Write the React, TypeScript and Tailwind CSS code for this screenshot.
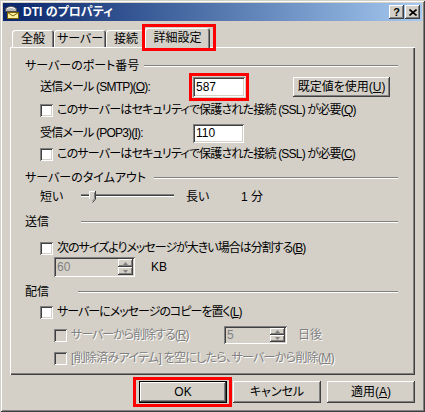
import React from 'react';

const raised =
  'shadow-[inset_-1px_-1px_#404040,inset_1px_1px_#ffffff,inset_-2px_-2px_#808080,inset_2px_2px_#d4d0c8]';
const sunken =
  'shadow-[inset_1px_1px_#808080,inset_-1px_-1px_#ffffff,inset_2px_2px_#404040,inset_-2px_-2px_#d4d0c8]';
const dim = 'text-[#808080] [text-shadow:1px_1px_0_#ffffff]';

const Check: React.FC<{ disabled?: boolean }> = ({ disabled }) => (
  <span className={`block w-[13px] h-[13px] shrink-0 ${disabled ? 'bg-[#d4d0c8]' : 'bg-white'} ${sunken}`} />
);

const GroupHead: React.FC<{ label: string; textW: string; className?: string }> = ({ label, textW, className }) => (
  <div className={`flex items-center h-4 pl-[15px] pr-[17px] ${className ?? ''}`}>
    <span className={`${textW} shrink-0 whitespace-nowrap`}>{label}</span>
    <div className="flex-1 h-[2px] border-t border-t-[#808080] border-b border-b-white" />
  </div>
);

const Arrow: React.FC<{ up?: boolean }> = ({ up }) => (
  <svg width="5" height="3" viewBox="0 0 5 3">
    <polygon points={up ? '2.5,0 5,3 0,3' : '0,0 5,0 2.5,3'} fill="#808080" />
  </svg>
);

const Spin: React.FC<{ value: string; className: string }> = ({ value, className }) => (
  <div className={`flex p-[2px] bg-[#d4d0c8] ${sunken} ${className}`}>
    <span className="flex-1 flex items-center pl-[1px] text-[#808080]">{value}</span>
    <div className="flex flex-col w-[15px]">
      <span className={`flex-1 flex items-center justify-center bg-[#d4d0c8] ${raised}`}>
        <Arrow up />
      </span>
      <span className={`flex-1 flex items-center justify-center bg-[#d4d0c8] ${raised}`}>
        <Arrow />
      </span>
    </div>
  </div>
);

const Tab: React.FC<{ label: string; w: string }> = ({ label, w }) => (
  <div
    className={`${w} h-[17px] flex items-center justify-center rounded-t-[3px] shadow-[inset_1px_1px_#ffffff,inset_-1px_0_#404040,inset_-2px_0_#808080]`}
  >
    {label}
  </div>
);

const Button: React.FC<{ children: React.ReactNode; className?: string }> = ({ children, className }) => (
  <div className={`flex items-center justify-center bg-[#d4d0c8] whitespace-nowrap ${raised} ${className ?? ''}`}>
    {children}
  </div>
);

const TitleIcon = () => (
  <svg width="16" height="16" viewBox="0 0 16 16">
    <path d="M1.5 7.5 V4.5 Q7 0.5 12.5 4.5 V7.5 Z" fill="#b8b8b8" stroke="#505050" />
    <path d="M3 4.5 Q7 2 11 4.5" fill="none" stroke="#ffffff" />
    <rect x="3.5" y="8.5" width="11" height="6" fill="#fff3a0" stroke="#7a6000" />
    <polyline points="3.5,8.5 9,12 14.5,8.5" fill="none" stroke="#7a6000" />
  </svg>
);

export default function App() {
  return (
    <div
      className={`w-[425px] h-[412px] p-[3px] flex flex-col bg-[#d4d0c8] text-black text-[12px] leading-none font-['Liberation_Sans','Noto_Sans_CJK_JP',sans-serif] [font-feature-settings:'palt'] shadow-[inset_1px_1px_#d4d0c8,inset_-1px_-1px_#404040,inset_2px_2px_#ffffff,inset_-2px_-2px_#808080]`}
    >
      {/* Title bar */}
      <div className="h-[18px] flex items-center bg-linear-to-r from-[#0a246a] to-[#a6caf0] pl-[1px] pr-[2px]">
        <TitleIcon />
        <span className="ml-[3px] text-white font-bold whitespace-nowrap">DTI のプロパティ</span>
        <div className="flex-1" />
        <Button className="w-[15px] h-[14px] font-bold text-[11px]">?</Button>
        <Button className="w-[15px] h-[14px] ml-[1px]">
          <svg width="8" height="7" viewBox="0 0 8 7">
            <path d="M0.5 0.5 L7.5 6.5 M7.5 0.5 L0.5 6.5" stroke="#000" strokeWidth="1.6" />
          </svg>
        </Button>
      </div>

      <div className="flex flex-col px-[7px]">
        {/* Tabs */}
        <div className="flex items-end h-[19px] mt-[7px] pl-[2px]">
          <Tab label="全般" w="w-[42px]" />
          <Tab label="サーバー" w="w-[52px]" />
          <Tab label="接続" w="w-[40px]" />
          <div className="relative z-10 -ml-[1px] -mb-[2px] w-[65px] h-[21px] pb-[2px] flex items-center justify-center rounded-t-[3px] bg-[#d4d0c8] shadow-[inset_1px_1px_#ffffff,inset_-1px_0_#404040,inset_-2px_0_#808080]">
            詳細設定
            <span className="absolute -left-[3px] -right-[6px] -top-[4px] -bottom-[2px] border-3 border-[#ff0000] pointer-events-none" />
          </div>
        </div>

        {/* Panel */}
        <div className="h-[328px] flex flex-col shadow-[inset_1px_1px_#ffffff,inset_-1px_-1px_#404040,inset_-2px_-2px_#808080]">
          <GroupHead label="サーバーのポート番号" textW="w-[119px]" className="mt-[11px]" />

          <div className="mt-[3px] h-5 flex items-center pl-[30px]">
            <span className="w-[153px] shrink-0 whitespace-nowrap tracking-[-0.8px]">
              送信メール (SMTP)(<u>O</u>):
            </span>
            <div
              className={`w-[52px] h-5 flex items-center pl-[3px] bg-white ${sunken} outline-3 outline-[#ff0000] outline-offset-1`}
            >
              587
            </div>
            <Button className="ml-[48px] w-[97px] h-5">
              既定値を使用(<u>U</u>)
            </Button>
          </div>

          <div className="mt-[5px] h-4 flex items-center pl-[30px] gap-[4px] whitespace-nowrap tracking-[-0.8px]">
            <Check />
            <span>
              このサーバーはセキュリティで保護された接続 (SSL) が必要(<u>Q</u>)
            </span>
          </div>

          <div className="mt-[5px] h-5 flex items-center pl-[30px]">
            <span className="w-[153px] shrink-0 whitespace-nowrap tracking-[-0.8px]">
              受信メール (POP3)(<u>I</u>):
            </span>
            <div className={`w-[51px] h-[19px] flex items-center pl-[3px] bg-white ${sunken}`}>110</div>
          </div>

          <div className="mt-[3px] h-4 flex items-center pl-[30px] gap-[4px] whitespace-nowrap tracking-[-0.8px]">
            <Check />
            <span>
              このサーバーはセキュリティで保護された接続 (SSL) が必要(<u>C</u>)
            </span>
          </div>

          <GroupHead label="サーバーのタイムアウト" textW="w-[129px]" className="mt-[8px]" />

          <div className="mt-[3px] h-4 flex items-center pl-[30px] whitespace-nowrap">
            <span className="w-[41px] shrink-0">短い</span>
            <div className="relative w-[93px] h-[12px] shrink-0">
              <div className="mt-[3px] h-[3px] border-t border-t-[#808080] bg-[#404040] border-b border-b-white" />
              <svg className="absolute left-[8px] top-0" width="7" height="12" viewBox="0 0 7 12">
                <polygon points="0,0 7,0 7,8 3.5,11.5 0,8" fill="#d4d0c8" />
                <polyline points="0.5,8 0.5,0.5 6,0.5" fill="none" stroke="#ffffff" />
                <polyline points="6.5,0 6.5,8.2 3.5,11.5" fill="none" stroke="#404040" />
                <polyline points="5.5,1.5 5.5,7.8 3.5,10" fill="none" stroke="#808080" />
              </svg>
            </div>
            <span className="ml-[12px] w-[55px] shrink-0">長い</span>
            <span>1 分</span>
          </div>

          <GroupHead label="送信" textW="w-[56px]" className="mt-[9px]" />

          <div className="mt-[10px] h-4 flex items-center pl-[30px] gap-[4px] whitespace-nowrap tracking-[-1px]">
            <Check />
            <span>
              次のサイズよりメッセージが大きい場合は分割する(<u>B</u>)
            </span>
          </div>

          <div className="mt-[1px] h-5 flex items-center pl-[44px]">
            <Spin value="60" className="w-[81px] h-5" />
            <span className="ml-[16px]">KB</span>
          </div>

          <GroupHead label="配信" textW="w-[53px]" className="mt-[7px]" />

          <div className="mt-[4px] h-4 flex items-center pl-[30px] gap-[4px] whitespace-nowrap tracking-[-1px]">
            <Check />
            <span>
              サーバーにメッセージのコピーを置く(<u>L</u>)
            </span>
          </div>

          <div className="mt-[6px] h-[18px] flex items-center pl-[44px] whitespace-nowrap">
            <div className="w-[170px] shrink-0 flex items-center gap-[4px] tracking-[-1px]">
              <Check disabled />
              <span className={dim}>
                サーバーから削除する(<u>R</u>)
              </span>
            </div>
            <Spin value="5" className="w-[63px] h-[18px]" />
            <span className={`ml-[11px] ${dim}`}>日後</span>
          </div>

          <div className="mt-[6px] h-4 flex items-center pl-[44px] gap-[4px] whitespace-nowrap tracking-[-0.7px]">
            <Check disabled />
            <span className={dim}>
              [削除済みアイテム] を空にしたら、サーバーから削除(<u>M</u>)
            </span>
          </div>
        </div>

        {/* Dialog buttons */}
        <div className="mt-[6px] flex justify-end gap-[6px]">
          <div className="relative">
            <div className="w-[88px] h-[22px] flex items-center justify-center bg-[#d4d0c8] shadow-[inset_0_0_0_1px_#000000,inset_-2px_-2px_#404040,inset_2px_2px_#ffffff,inset_-3px_-3px_#808080]">
              OK
            </div>
            <span className="absolute -left-[6px] -right-[5px] -top-[4px] -bottom-[4px] border-3 border-[#ff0000] pointer-events-none" />
          </div>
          <Button className="w-[88px] h-[22px]">キャンセル</Button>
          <Button className="w-[88px] h-[22px]">
            適用(<u>A</u>)
          </Button>
        </div>
      </div>
    </div>
  );
}
